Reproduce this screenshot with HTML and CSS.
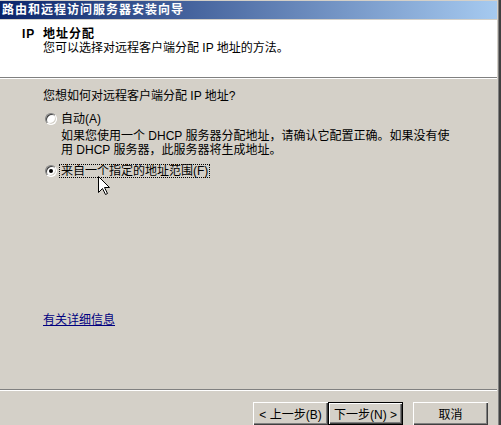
FILE: index.html
```html
<!DOCTYPE html>
<html lang="zh-CN">
<head>
    <meta charset="UTF-8">
    <title>路由和远程访问服务器安装向导</title>
    <link rel="stylesheet" href="styles.css">
</head>
<body>
    <div class="window">
        <div class="titlebar">路由和远程访问服务器安装向导</div>

        <div class="header">
            <div class="header-title"><span class="ip">IP</span>地址分配</div>
            <div class="header-sub">您可以选择对远程客户端分配 IP 地址的方法。</div>
        </div>

        <div class="content">
            <p class="question">您想如何对远程客户端分配 IP 地址?</p>

            <label class="option">
                <span class="radio"></span>
                <span class="option-text">自动(A)</span>
            </label>
            <p class="option-desc">如果您使用一个 DHCP 服务器分配地址，请确认它配置正确。如果没有使<br>用 DHCP 服务器，此服务器将生成地址。</p>

            <label class="option second">
                <span class="radio checked"></span>
                <span class="option-text focus">来自一个指定的地址范围(F)</span>
            </label>

            <p class="more"><a href="#">有关详细信息</a></p>
        </div>

        <div class="footer">
            <button class="btn">&lt; 上一步(B)</button>
            <button class="btn default">下一步(N) &gt;</button>
            <button class="btn cancel">取消</button>
        </div>
    </div>

    <!-- mouse pointer -->
    <svg class="cursor" width="12" height="20" viewBox="0 0 12 20">
        <path d="M0.5 0.5 V16.5 L4.5 12.5 L7.5 18.5 L9.5 17.5 L6.5 11.5 H11.5 Z" fill="#fff" stroke="#000" stroke-width="1"/>
    </svg>
</body>
</html>
```

FILE: styles.css
```css
*{
    margin: 0;
    padding: 0;
    box-sizing: border-box;
}
body{
    width: 501px;
    height: 425px;
    overflow: hidden;
    background: #d4d0c8;
    font: 12px "Liberation Sans", "Noto Sans CJK SC", sans-serif;
    color: #000;
}
.window{
    height: 425px;
    display: flex;
    flex-direction: column;
    border-right: 2px solid #404040;
    padding-right: 2px;
    box-shadow: inset -1px 0 #808080;
}
.titlebar{
    margin: 1px 0 1px 0;
    height: 18px;
    line-height: 18px;
    padding-left: 2px;
    background: linear-gradient(to right, #0a246a, #a6caf0);
    color: #fff;
    font-weight: bold;
    letter-spacing: 1px;
}
.header{
    height: 58px;
    padding-top: 7px;
    background: #fff;
    border-bottom: 1px solid #808080;
    box-shadow: 0 1px 0 #fff;
    line-height: 14px;
}
.header-title{
    padding-left: 22px;
    font-weight: bold;
    letter-spacing: 1px;
}
.ip{
    display: inline-block;
    width: 21px;
}
.header-sub{
    padding-left: 43px;
}
.content{
    flex: 1;
    padding-left: 43px;
}
.question{
    margin-top: 11px;
    line-height: 14px;
}
.option{
    display: flex;
    align-items: center;
    height: 14px;
    margin-top: 9px;
}
.option.second{
    margin-top: 7px;
}
.radio{
    position: relative;
    width: 12px;
    height: 12px;
    margin: 0 2px 0 2px;
    border-radius: 50%;
    background: #fff;
    border: 1px solid;
    border-color: #808080 #fff #fff #808080;
    box-shadow: inset 1px 1px #404040, inset -1px -1px #d4d0c8;
}
.radio.checked::after{
    content: "";
    position: absolute;
    left: 3px;
    top: 3px;
    width: 4px;
    height: 4px;
    border-radius: 50%;
    background: #000;
}
.option-text{
    padding: 0 1px;
    line-height: 12px;
    border: 1px dotted transparent;
}
.option-text.focus{
    border-color: #000;
}
.option-desc{
    margin-top: 3px;
    padding-left: 18px;
    line-height: 14px;
}
.more{
    margin-top: 135px;
    line-height: 14px;
}
.more a{
    color: #000080;
    text-decoration: underline;
}
.footer{
    height: 36px;
    padding: 12px 9px 0 0;
    display: flex;
    justify-content: flex-end;
    border-top: 1px solid #808080;
    box-shadow: inset 0 1px #fff;
}
.btn{
    width: 75px;
    height: 23px;
    background: #d4d0c8;
    border: none;
    box-shadow: inset 1px 1px #fff, inset -1px -1px #404040, inset -2px -2px #808080;
    font: inherit;
    color: #000;
}
.btn.default{
    border: 1px solid #000;
}
.btn.cancel{
    margin-left: 10px;
}
.cursor{
    position: absolute;
    left: 98px;
    top: 176px;
}
```
